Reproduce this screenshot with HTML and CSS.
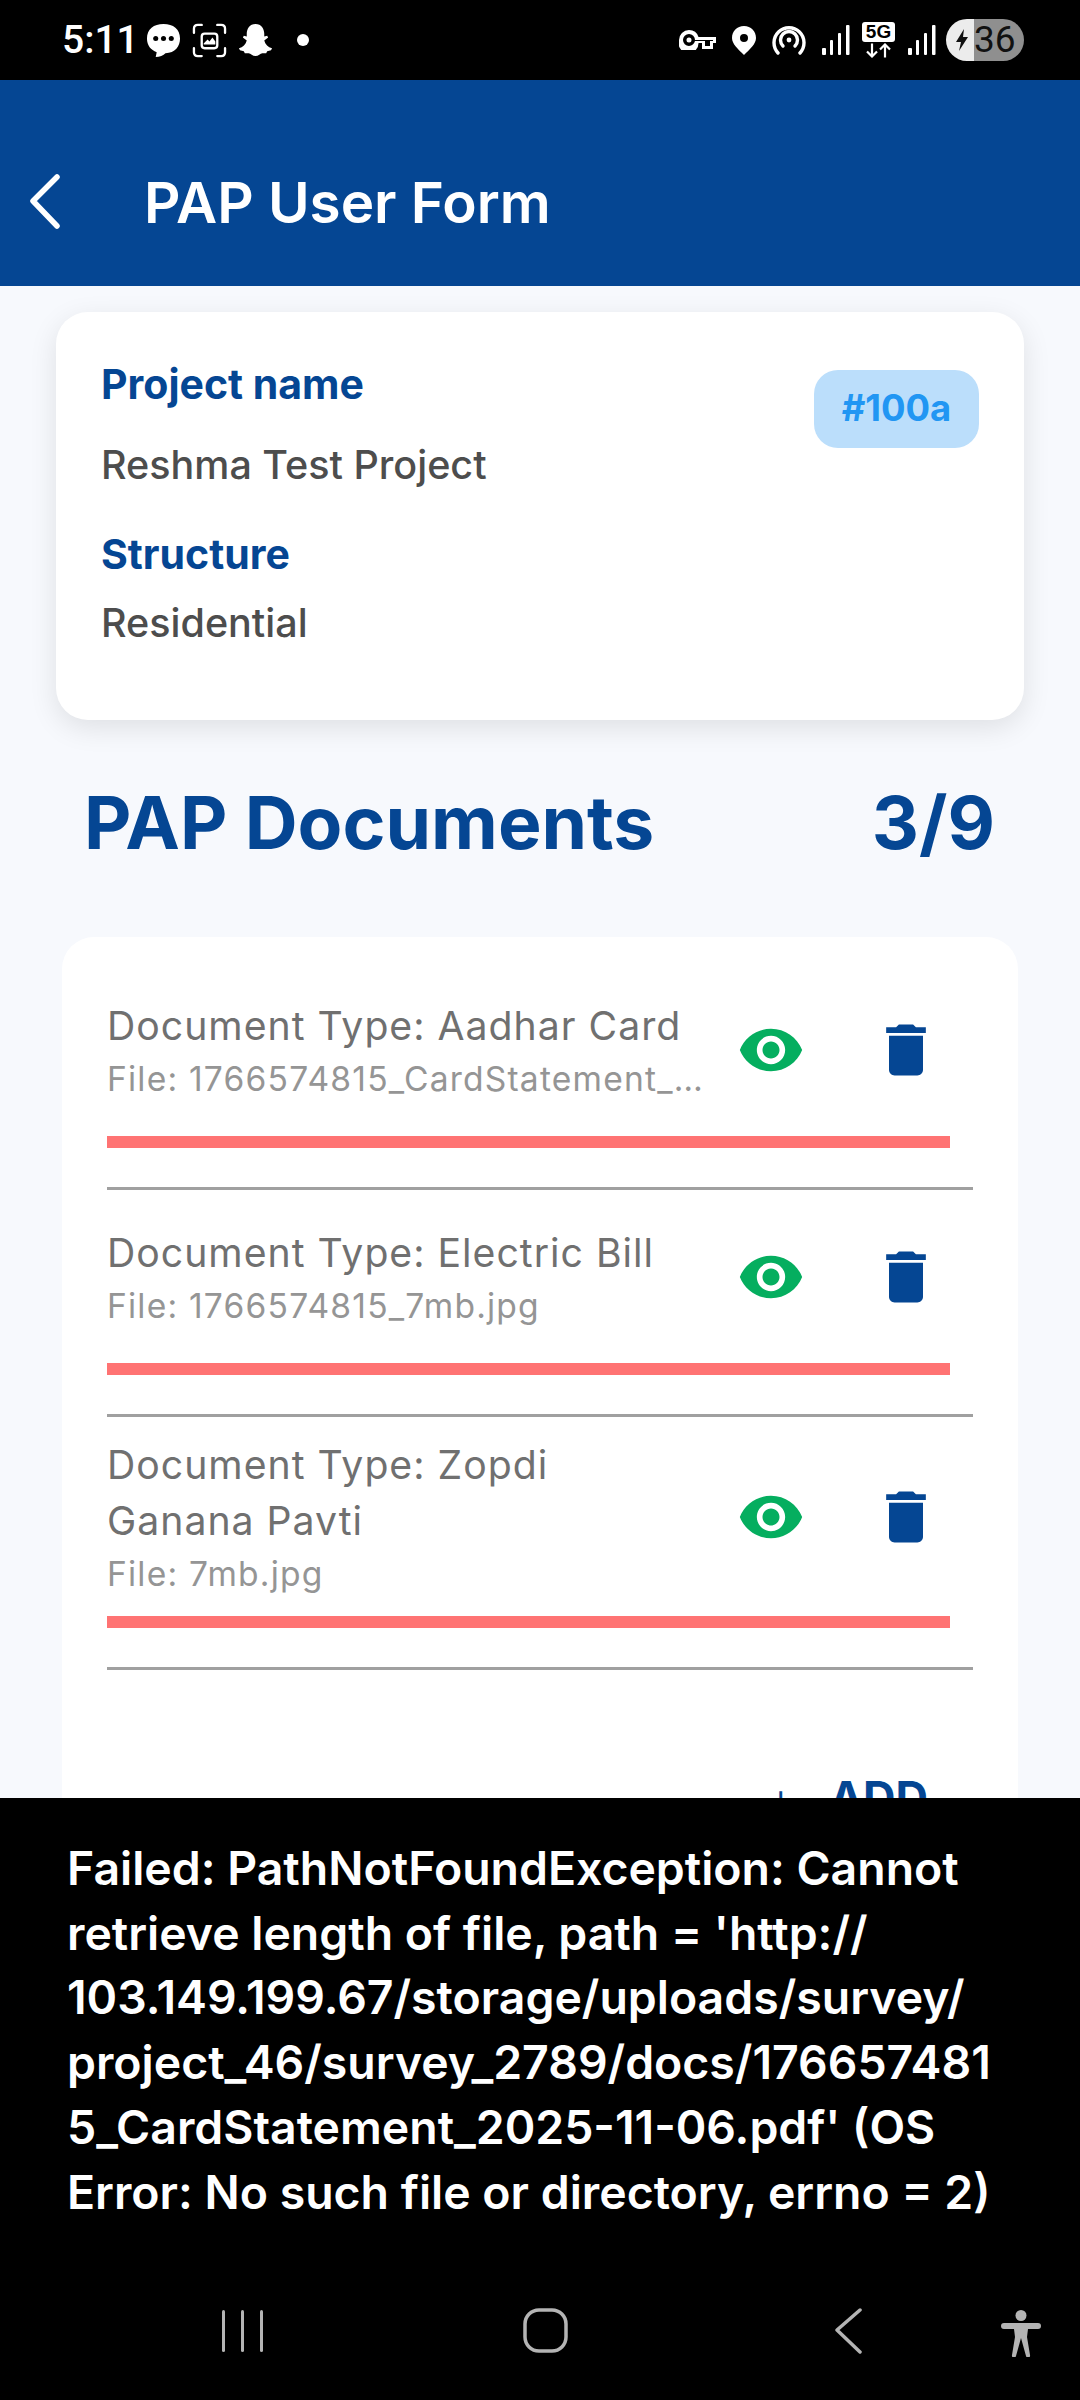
FILE: index.html
```html
<!DOCTYPE html>
<html lang="en">
<head>
    <meta charset="UTF-8">
    <title>PAP User Form</title>
    <link rel="stylesheet" href="styles.css">
</head>
<body>
    <div class="screen">
        <div class="status-bar">
            <div class="status-left">
                <span class="clock">5:11</span>
                <svg class="ic-chat" viewBox="0 0 36 36"><path fill="#fff" d="M18 1C8 1 1 6 1 16c0 7 4 12 10 14l-1 5c4 0 8-2 10-4 10 0 15-7 15-15C35 6 28 1 18 1z"/><circle cx="10" cy="16" r="2.600"/><circle cx="18" cy="16" r="2.600"/><circle cx="26" cy="16" r="2.600"/></svg>
                <svg class="ic-shot" viewBox="0 0 36 36" fill="none" stroke="#fff" stroke-width="2.400" stroke-linecap="round"><path d="M2 10V6q0-4 4-4h4M26 2h4q4 0 4 4v4M34 26v4q0 4-4 4h-4M10 34H6q-4 0-4-4v-4"/><rect x="10" y="11" width="16" height="15" rx="3"/><path fill="#fff" stroke="none" d="M12 21l4-4 2 2 3-4 3 4v3H12z"/></svg>
                <svg class="ic-ghost" viewBox="0 0 36 36"><path fill="#fff" d="M18 1c6 0 9 5 9 10v3l3-1 1 2-4 3c1 4 4 7 8 8l-1 2-4 1-1 2-4 0c-2 0-4 3-7 3s-5-3-7-3l-4 0-1-2-4-1-1-2c4-1 7-4 8-8l-4-3 1-2 3 1v-3C9 6 12 1 18 1z"/></svg>
                <span class="dot"></span>
            </div>
            <div class="status-right">
                <svg class="ic-key" viewBox="0 0 37 20"><path fill="#fff" fill-rule="evenodd" d="M10 0a10 10 0 019.500 7H37v6h-3v6H23v-6h-3.500A10 10 0 110 10 10 10 0 0110 0zm0 4a6 6 0 100 12 7 7 0 006-5h10v5h5v-5h3V10H16a6 6 0 00-6-6zm0 3.500a2.500 2.500 0 110 5 2.500 2.500 0 010-5z"/></svg>
                <svg class="ic-pin" viewBox="0 0 24 29"><path fill="#fff" fill-rule="evenodd" d="M12 0C5 0 0 5 0 12c0 6 6 11 12 17 6-6 12-11 12-17C24 5 19 0 12 0zm0 8a4 4 0 110 8 4 4 0 010-8z"/></svg>
                <svg class="ic-hotspot" viewBox="0 0 34 30" fill="none" stroke="#fff" stroke-width="3.400" stroke-linecap="round"><path d="M6 28A15 15 0 1 1 28 28"/><path d="M11 21A8.500 8.500 0 1 1 23 21"/><circle cx="17" cy="15" r="2.400" fill="#fff" stroke="none"/></svg>
                <svg class="ic-signal" viewBox="0 0 28 30" fill="#fff"><rect x="0" y="23" width="4" height="7" rx="1"/><rect x="8" y="15" width="3" height="15" rx="1"/><rect x="16" y="8" width="3" height="22" rx="1"/><rect x="24" y="0" width="3.500" height="30" rx="1"/></svg>
                <div class="net-5g">
                    <span class="net-label">5G</span>
                    <svg viewBox="0 0 33 14" fill="none" stroke="#fff" stroke-width="2.200"><path d="M10 0v13M5 8l5 5 5-5M23 14V1M18 6l5-5 5 5"/></svg>
                </div>
                <svg class="ic-signal" viewBox="0 0 28 30" fill="#fff"><rect x="0" y="23" width="4" height="7" rx="1"/><rect x="8" y="15" width="3" height="15" rx="1"/><rect x="16" y="8" width="3" height="22" rx="1"/><rect x="24" y="0" width="3.500" height="30" rx="1"/></svg>
                <div class="battery">
                    <svg viewBox="0 0 16 24"><path fill="#111" d="M10 1L2 14h5l-2 9 9-14H9z"/></svg>
                    <span>36</span>
                </div>
            </div>
        </div>

        <header class="app-bar">
            <svg class="back" viewBox="0 0 30 56" fill="none" stroke="#fff" stroke-width="5.500" stroke-linecap="round" stroke-linejoin="round"><path d="M27 3L3 27l24 25"/></svg>
            <h1>PAP User Form</h1>
        </header>

        <main class="content">
            <section class="project-card">
                <div class="project-info">
                    <div class="label">Project name</div>
                    <div class="value">Reshma Test Project</div>
                    <div class="label label-second">Structure</div>
                    <div class="value value-second">Residential</div>
                </div>
                <span class="badge">#100a</span>
            </section>

            <div class="docs-head">
                <h2>PAP Documents</h2>
                <span>3/9</span>
            </div>

            <section class="docs-card">
                <div class="doc-item">
                    <div class="doc-row">
                        <div class="doc-text">
                            <div class="doc-type">Document Type: Aadhar Card</div>
                            <div class="doc-file">File: 1766574815_CardStatement_2025-11-06.pdf</div>
                        </div>
                        <div class="doc-actions">
                            <svg class="ic-eye" viewBox="0 0 24 24"><path d="M12 4.500C7 4.500 2.730 7.610 1 12c1.730 4.390 6 7.500 11 7.500s9.270-3.110 11-7.500c-1.730-4.390-6-7.500-11-7.500zM12 17c-2.760 0-5-2.240-5-5s2.240-5 5-5 5 2.240 5 5-2.240 5-5 5zm0-8c-1.660 0-3 1.340-3 3s1.340 3 3 3 3-1.340 3-3-1.340-3-3-3z"/></svg>
                            <svg class="ic-trash" viewBox="0 0 24 24"><path d="M6 19c0 1.100.9 2 2 2h8c1.100 0 2-.9 2-2V7H6v12zM19 4h-3.500l-1-1h-5l-1 1H5v2h14V4z"/></svg>
                        </div>
                    </div>
                    <div class="progress"></div>
                    <div class="divider"></div>
                </div>
                <div class="doc-item">
                    <div class="doc-row">
                        <div class="doc-text">
                            <div class="doc-type">Document Type: Electric Bill</div>
                            <div class="doc-file">File: 1766574815_7mb.jpg</div>
                        </div>
                        <div class="doc-actions">
                            <svg class="ic-eye" viewBox="0 0 24 24"><path d="M12 4.500C7 4.500 2.730 7.610 1 12c1.730 4.390 6 7.500 11 7.500s9.270-3.110 11-7.500c-1.730-4.390-6-7.500-11-7.500zM12 17c-2.760 0-5-2.240-5-5s2.240-5 5-5 5 2.240 5 5-2.240 5-5 5zm0-8c-1.660 0-3 1.340-3 3s1.340 3 3 3 3-1.340 3-3-1.340-3-3-3z"/></svg>
                            <svg class="ic-trash" viewBox="0 0 24 24"><path d="M6 19c0 1.100.9 2 2 2h8c1.100 0 2-.9 2-2V7H6v12zM19 4h-3.500l-1-1h-5l-1 1H5v2h14V4z"/></svg>
                        </div>
                    </div>
                    <div class="progress"></div>
                    <div class="divider"></div>
                </div>
                <div class="doc-item">
                    <div class="doc-row">
                        <div class="doc-text">
                            <div class="doc-type">Document Type: Zopdi<br>Ganana Pavti</div>
                            <div class="doc-file">File: 7mb.jpg</div>
                        </div>
                        <div class="doc-actions">
                            <svg class="ic-eye" viewBox="0 0 24 24"><path d="M12 4.500C7 4.500 2.730 7.610 1 12c1.730 4.390 6 7.500 11 7.500s9.270-3.110 11-7.500c-1.730-4.390-6-7.500-11-7.500zM12 17c-2.760 0-5-2.240-5-5s2.240-5 5-5 5 2.240 5 5-2.240 5-5 5zm0-8c-1.660 0-3 1.340-3 3s1.340 3 3 3 3-1.340 3-3-1.340-3-3-3z"/></svg>
                            <svg class="ic-trash" viewBox="0 0 24 24"><path d="M6 19c0 1.100.9 2 2 2h8c1.100 0 2-.9 2-2V7H6v12zM19 4h-3.500l-1-1h-5l-1 1H5v2h14V4z"/></svg>
                        </div>
                    </div>
                    <div class="progress"></div>
                    <div class="divider"></div>
                </div>
                <div class="add-row">
                    <span class="add-plus">+</span>
                    <span>ADD</span>
                </div>
            </section>
        </main>

        <div class="toast">
            <p>Failed: PathNotFoundException: Cannot<br>retrieve length of file, path = 'http://<br>103.149.199.67/storage/uploads/survey/<br>project_46/survey_2789/docs/176657481<br>5_CardStatement_2025-11-06.pdf' (OS<br>Error: No such file or directory, errno = 2)</p>
        </div>

        <nav class="nav-bar">
            <svg class="nav-recents" viewBox="0 0 43 42" fill="#b4b4b4"><rect x="0" y="0" width="3" height="42" rx="1.500"/><rect x="19" y="0" width="3" height="42" rx="1.500"/><rect x="38" y="0" width="3" height="42" rx="1.500"/></svg>
            <svg class="nav-home" viewBox="0 0 45 45" fill="none" stroke="#b4b4b4" stroke-width="3.500"><rect x="2" y="2" width="41" height="41" rx="14"/></svg>
            <svg class="nav-back" viewBox="0 0 28 46" fill="none" stroke="#b4b4b4" stroke-width="3.500" stroke-linecap="round" stroke-linejoin="round"><path d="M26 2L3 22l23 22"/></svg>
            <svg class="nav-access" viewBox="0 0 40 47" fill="#b4b4b4"><circle cx="20" cy="5.500" r="5.500"/><path d="M3 13h34a2.500 2.500 0 010 6H27l-1 8 3 18a2 2 0 01-4 1l-5-18-5 18a2 2 0 01-4-1l3-18-1-8H3a2.500 2.500 0 010-6z"/></svg>
        </nav>
    </div>
</body>
</html>
```

FILE: styles.css
```css
* {
    box-sizing: border-box;
}

body {
    margin: 0;
    background: #000;
    font-family: Inter, 'Noto Sans', sans-serif;
}

.screen {
    display: flex;
    flex-direction: column;
    width: 1080px;
    height: 2400px;
    overflow: hidden;
}

/* status bar */
.status-bar {
    display: flex;
    justify-content: space-between;
    align-items: center;
    flex: 0 0 80px;
    padding: 0 56px 0 62px;
    background: #000;
    color: #fff;
}

.status-left,
.status-right {
    display: flex;
    align-items: center;
}

.clock {
    font-family: Roboto, sans-serif;
    font-size: 39px;
    font-weight: 500;
    width: 65px;
    margin-right: 19px;
}

.status-left svg {
    width: 35px;
    height: 35px;
    margin-right: 11px;
}

.dot {
    width: 12px;
    height: 12px;
    margin-left: 13px;
    border-radius: 50%;
    background: #fff;
}

.ic-key { width: 37px; height: 20px; margin-right: 16px; }
.ic-pin { width: 24px; height: 29px; margin-right: 16px; }
.ic-hotspot { width: 34px; height: 30px; margin-right: 16px; }
.ic-signal { width: 28px; height: 30px; margin-right: 12px; }

.net-5g {
    display: flex;
    flex-direction: column;
    align-items: center;
    width: 33px;
    margin-right: 13px;
}

.net-label {
    width: 33px;
    height: 20px;
    border-radius: 3px;
    background: #fff;
    color: #000;
    font: 700 19px/20px 'Liberation Sans', sans-serif;
    text-align: center;
}

.net-5g svg {
    width: 33px;
    height: 15px;
    margin-top: 1px;
}

.battery {
    display: flex;
    align-items: center;
    width: 78px;
    height: 42px;
    margin-left: -2px;
    border-radius: 21px;
    background: linear-gradient(90deg, #ececec 0 28px, #8f8f8f 28px);
    color: #111;
    font: 400 37px/42px Roboto, sans-serif;
}

.battery svg {
    width: 16px;
    height: 24px;
    margin: 0 4px 0 8px;
}

/* app bar */
.app-bar {
    display: flex;
    align-items: center;
    flex: 0 0 206px;
    padding: 38px 0 0 30px;
    background: #054693;
}

.back {
    width: 30px;
    height: 56px;
    margin-right: 84px;
}

.app-bar h1 {
    margin: 0;
    color: #fff;
    font-size: 56.6px;
    font-weight: 600;
}

/* main content, clipped by the toast below */
.content {
    flex: 0 0 1512px;
    overflow: hidden;
    background: #f7f9fd;
    padding-top: 26px;
}

.project-card {
    display: flex;
    justify-content: space-between;
    align-items: flex-start;
    height: 408px;
    margin: 0 56px;
    padding: 50px 45px 0 45px;
    border-radius: 32px;
    background: #fff;
    box-shadow: 0 8px 28px rgba(0, 0, 0, 0.1);
}

.label {
    color: #054693;
    font-size: 41px;
    font-weight: 700;
    line-height: 44px;
}

.label-second {
    margin-top: 43px;
}

.value {
    color: #4d4d4d;
    font-size: 39.5px;
    font-weight: 500;
    line-height: 48px;
    margin-top: 35px;
}

.value-second {
    margin-top: 23px;
}

.badge {
    width: 165px;
    height: 78px;
    margin-top: 8px;
    border-radius: 24px;
    background: #bbdefb;
    color: #2196f3;
    font-size: 36.4px;
    font-weight: 700;
    line-height: 76px;
    text-align: center;
}

.docs-head {
    display: flex;
    justify-content: space-between;
    align-items: center;
    height: 110px;
    margin: 47px 85px 0 84px;
    color: #054693;
    font-size: 73.2px;
    font-weight: 700;
}

.docs-head h2 {
    margin: 0;
    font-size: inherit;
}

.docs-card {
    height: 1000px;
    margin: 60px 62px 0 62px;
    padding: 26px 45px 0 45px;
    border-radius: 32px;
    background: #fff;
}

.doc-item {
    padding-top: 14px;
}

.doc-row {
    display: flex;
    align-items: center;
    min-height: 146px;
}

.doc-text {
    width: 597px;
    padding: 6px 0 4px;
}

.doc-type {
    color: #707070;
    font-size: 39.2px;
    line-height: 56px;
    letter-spacing: 1px;
}

.doc-file {
    color: #959595;
    font-size: 33.6px;
    line-height: 50px;
    letter-spacing: 1.2px;
    white-space: nowrap;
    overflow: hidden;
    text-overflow: ellipsis;
}

.doc-actions {
    display: flex;
    align-items: center;
    gap: 67px;
    margin-left: 33px;
}

.ic-eye {
    width: 68px;
    height: 68px;
    fill: #05ae5f;
}

.ic-trash {
    width: 68px;
    height: 68px;
    fill: #054693;
}

.progress {
    height: 12px;
    width: 843px;
    margin-top: 13px;
    background: #ff7373;
}

.divider {
    height: 3px;
    width: 866px;
    margin-top: 39px;
    background: #a0a0a0;
}

.add-row {
    display: flex;
    justify-content: flex-end;
    align-items: center;
    gap: 34px;
    margin: 100px 45px 0 0;
    color: #054693;
    font-size: 45px;
    font-weight: 700;
}

.add-plus {
    font-weight: 300;
}

/* toast and nav */
.toast {
    flex: 0 0 472px;
    padding: 38px 40px 0 67px;
    background: #000;
}

.toast p {
    margin: 0;
    color: #fff;
    font-size: 46.4px;
    font-weight: 600;
    line-height: 64.7px;
    white-space: nowrap;
}

.nav-bar {
    flex: 1;
    background: #000;
    display: flex;
    align-items: flex-start;
    padding-left: 222px;
}

.nav-recents { width: 43px; height: 42px; margin-top: 40px; }
.nav-home { width: 45px; height: 45px; margin: 38px 0 0 258px; }
.nav-back { width: 28px; height: 46px; margin: 38px 0 0 266px; }
.nav-access { width: 40px; height: 47px; margin: 40px 0 0 139px; }
```
